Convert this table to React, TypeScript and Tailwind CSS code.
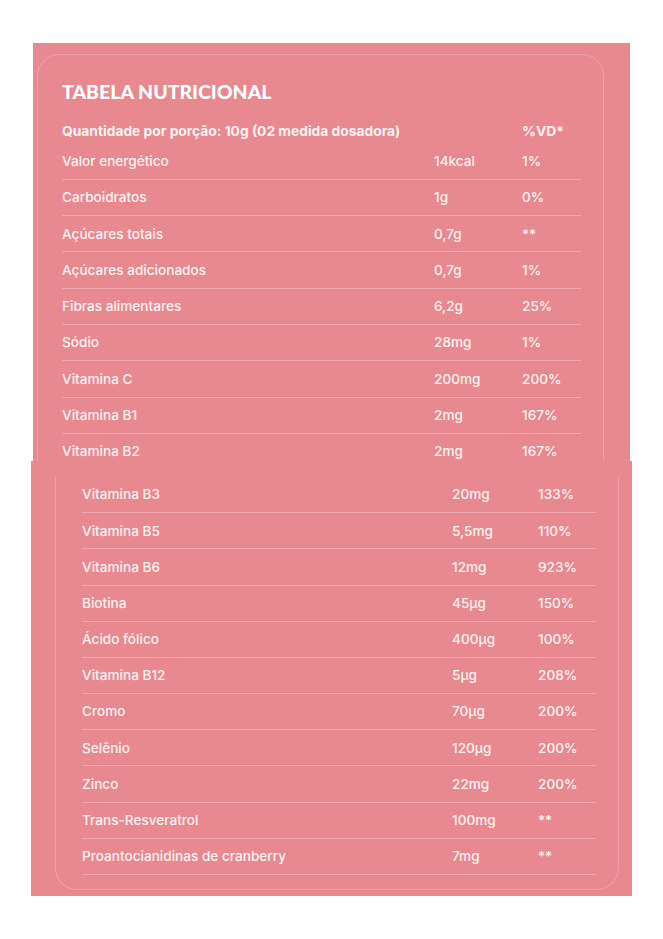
const topRows = [
  ["Valor energético", "14kcal", "1%"],
  ["Carboidratos", "1g", "0%"],
  ["Açúcares totais", "0,7g", "**"],
  ["Açúcares adicionados", "0,7g", "1%"],
  ["Fibras alimentares", "6,2g", "25%"],
  ["Sódio", "28mg", "1%"],
  ["Vitamina C", "200mg", "200%"],
  ["Vitamina B1", "2mg", "167%"],
  ["Vitamina B2", "2mg", "167%"],
];

const bottomRows = [
  ["Vitamina B3", "20mg", "133%"],
  ["Vitamina B5", "5,5mg", "110%"],
  ["Vitamina B6", "12mg", "923%"],
  ["Biotina", "45µg", "150%"],
  ["Ácido fólico", "400µg", "100%"],
  ["Vitamina B12", "5µg", "208%"],
  ["Cromo", "70µg", "200%"],
  ["Selênio", "120µg", "200%"],
  ["Zinco", "22mg", "200%"],
  ["Trans-Resveratrol", "100mg", "**"],
  ["Proantocianidinas de cranberry", "7mg", "**"],
];

export default function App() {
  return (
    <div className="min-h-[939px] bg-white font-['Inter',sans-serif] text-[#fff2f2]">
      {/* upper block */}
      <div className="ml-[33px] mt-[43px] h-[418px] w-[597px] overflow-hidden bg-[#e88990] pl-[4px] pt-[11px]">
        <div className="h-[460px] w-[567px] rounded-[22px] border border-white/20 pl-[24px] pt-[27px]">
          <h2 className="font-['Lato',sans-serif] text-[19.5px] font-black leading-none text-white">
            TABELA NUTRICIONAL
          </h2>
          <div className="mt-[18px] grid h-[24px] grid-cols-[460px_60px] items-center text-[13.8px] font-bold">
            <span>Quantidade por porção: 10g (02 medida dosadora)</span>
            <span>%VD*</span>
          </div>
          {topRows.map(([name, qty, vd]) => (
            <div key={name} className="grid h-[36.3px] w-[519px] grid-cols-[372px_88px_59px] items-center border-b border-white/25 text-[13.6px] font-medium">
              <span>{name}</span>
              <span>{qty}</span>
              <span>{vd}</span>
            </div>
          ))}
        </div>
      </div>
      {/* lower block */}
      <div className="ml-[31px] flex h-[435px] w-[601px] flex-col justify-end overflow-hidden bg-[#e88990] pb-[6px] pl-[24px]">
        <div className="w-[564px] rounded-b-[22px] border border-t-0 border-white/20 pb-[14px] pl-[26px]">
          {bottomRows.map(([name, qty, vd]) => (
            <div key={name} className="grid h-[36.2px] w-[514px] grid-cols-[370px_86px_58px] items-center border-b border-white/25 text-[13.6px] font-medium">
              <span>{name}</span>
              <span>{qty}</span>
              <span>{vd}</span>
            </div>
          ))}
        </div>
      </div>
    </div>
  );
}
